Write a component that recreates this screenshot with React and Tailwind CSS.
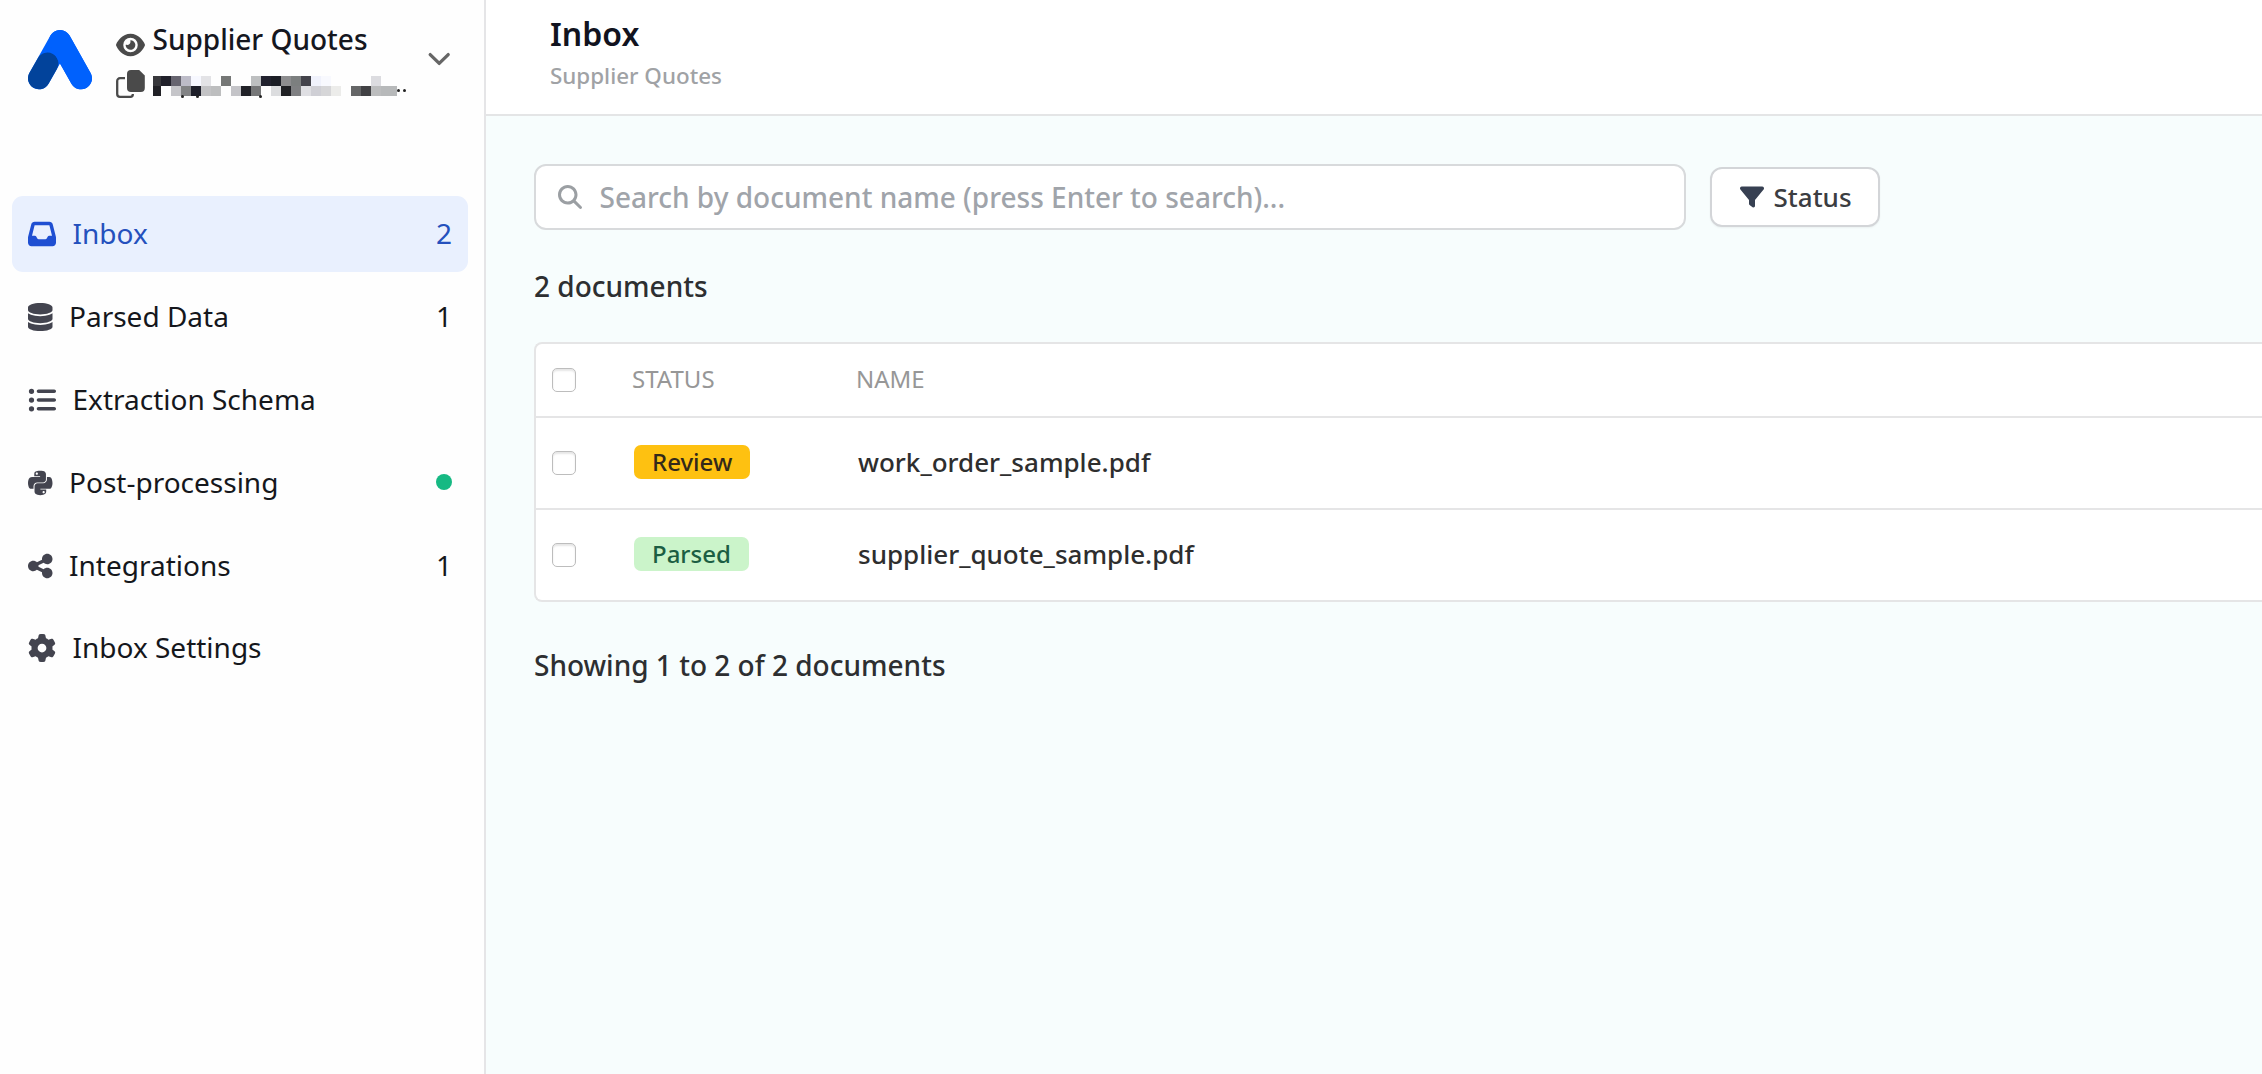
import {
  FaEye,
  FaDatabase,
  FaPython,
  FaShareNodes,
  FaGear,
  FaFilter,
  FaInbox,
  FaListUl,
  FaMagnifyingGlass,
} from "react-icons/fa6";

const MASK_TOP = [
  "#38383c", "#20202a", "#66646f", "#bdbcc8", "#f7f8ff", "#e3e3e6", "", "#757776", "", "",
  "#bdbfc0", "#22222e", "#1c1e26", "#8d8d8f", "#7c7f7f", "#43434b", "#f0f2fc", "#f8f9fe", "", "",
  "", "", "#dcdce0", "", "",
];
const MASK_BOTTOM = [
  "#212126", "", "#c5c5c9", "#828385", "#1e1f2a", "#c3c3c5", "#bdbebf", "", "#c4c4c8", "#212228",
  "#767778", "", "#dcdddf", "#202125", "#7f8082", "#dfdfe3", "#cfcfd5", "#d6d6d8", "#ececea", "",
  "#656667", "#414144", "#bcbdbe", "#b7b9ba", "#b7b9ba",
];

function MaskRow({ cells }) {
  return (
    <div className="flex h-[10px]">
      {cells.map((c, i) => (
        <span
          key={i}
          className={
            i === 0
              ? "w-[8px] shrink-0"
              : i === cells.length - 1
                ? "w-[6px] shrink-0"
                : "w-[10px] shrink-0"
          }
          style={{ backgroundColor: c || "transparent" }}
        />
      ))}
    </div>
  );
}

function Logo() {
  return (
    <svg viewBox="0 0 64 60" className="h-[60px] w-[64px] shrink-0" fill="none">
      <path
        d="M11 48.3 L32 11 L53 48.3"
        stroke="#0061fd"
        strokeWidth="22"
        strokeLinecap="round"
        strokeLinejoin="round"
      />
      <path d="M11 48.3 L19.4 33.6" stroke="#02439b" strokeWidth="22" strokeLinecap="round" />
      <path d="M32 11 L53 48.3" stroke="#0061fd" strokeWidth="22" strokeLinecap="round" />
    </svg>
  );
}

function CopyIcon() {
  return (
    <svg viewBox="0 0 29 28" className="h-[28px] w-[29px]" fill="none">
      <path
        d="M9 8.2H4A2.8 2.8 0 0 0 1.2 11V24A2.8 2.8 0 0 0 4 26.8H14.5A2.3 2.3 0 0 0 16.8 24.5V24"
        stroke="#4a4a4a"
        strokeWidth="2.3"
      />
      <path
        d="M15 0H23.2L28.8 5.4V18A4 4 0 0 1 24.8 22H15A4 4 0 0 1 11 18V4A4 4 0 0 1 15 0Z"
        fill="#4a4a4a"
      />
    </svg>
  );
}

function ChevronIcon() {
  return (
    <svg viewBox="0 0 24 24" className="-ml-px mt-[28px] size-[24px] shrink-0" fill="none">
      <path
        d="M3.2 7.6 L12.2 16.4 L21.2 7.6"
        stroke="#666"
        strokeWidth="3.3"
        strokeLinecap="round"
        strokeLinejoin="round"
      />
    </svg>
  );
}

const NAV = [
  { label: "Inbox", icon: FaInbox, count: "2", active: true },
  { label: "Parsed Data", icon: FaDatabase, count: "1", narrow: true },
  { label: "Extraction Schema", icon: FaListUl },
  { label: "Post-processing", icon: FaPython, dot: true, narrow: true },
  { label: "Integrations", icon: FaShareNodes, count: "1", narrow: true },
  { label: "Inbox Settings", icon: FaGear },
];

function NavItem({ item }) {
  const Icon = item.icon;
  return (
    <a
      className={
        item.active
          ? "flex h-[76px] items-center rounded-[11px] bg-[#e9f0fe] px-4 text-[#2450bd]"
          : "flex h-[76px] items-center rounded-[11px] px-4 text-[#15171c] last:-mt-px"
      }
    >
      <Icon
        className={
          (item.narrow ? "h-[28px] w-[24.5px] shrink-0 " : "h-[28px] w-[28px] shrink-0 ") +
          (item.active ? "text-[#1f4fd2]" : "text-[#43444f]")
        }
      />
      <span className="-mt-[2px] ml-[16.5px] flex-1">{item.label}</span>
      {item.count && <span className="-mt-[2px]">{item.count}</span>}
      {item.dot && <span className="mb-[2px] size-4 rounded-full bg-[#16b983]" />}
    </a>
  );
}

function Sidebar() {
  return (
    <aside className="flex w-[486px] shrink-0 flex-col border-r-2 border-[#e5e5e7] bg-[#fefefe] text-[28px] leading-[40px]">
      <div className="flex h-[196px] shrink-0 items-start pl-[28px] pt-[19px]">
        <div className="mt-[11px]">
          <Logo />
        </div>
        <div className="ml-[24px] w-[312px] shrink-0">
          <div className="flex items-center">
            <FaEye className="mt-[11px] h-[26px] w-[29px] shrink-0 text-[#4a4a4a]" />
            <span className="ml-[7.5px] font-medium text-[#15171f]">Supplier Quotes</span>
          </div>
          <div className="mt-[11px] flex">
            <CopyIcon />
            <div className="relative ml-[8px] mt-[6px] w-[244px] shrink-0">
              <MaskRow cells={MASK_TOP} />
              <MaskRow cells={MASK_BOTTOM} />
              <span className="absolute left-[28px] top-[19px] h-[3px] w-[3px] rounded-full bg-[#222]" />
              <span className="absolute left-[43px] top-[19px] h-[3px] w-[3px] rounded-full bg-[#222]" />
              <span className="absolute left-[106px] top-[19px] h-[3px] w-[3px] rounded-full bg-[#222]" />
            </div>
            <div className="mt-[19px] flex gap-[3px]">
              <span className="size-[3px] rounded-full bg-[#222]" />
              <span className="size-[3px] rounded-full bg-[#222]" />
            </div>
          </div>
        </div>
        <ChevronIcon />
      </div>
      <nav className="flex flex-col gap-[7px] pl-[12px] pr-[16px]">
        {NAV.map((item) => (
          <NavItem key={item.label} item={item} />
        ))}
      </nav>
    </aside>
  );
}

function Checkbox() {
  return (
    <span className="block size-[24px] rounded-[5px] border border-[#bdbdbd] bg-white shadow-[inset_0_2px_2px_rgba(0,0,0,0.1)]" />
  );
}

const ROWS = [
  { status: "Review", name: "work_order_sample.pdf", badge: "bg-[#fec111] text-[#33291a]" },
  { status: "Parsed", name: "supplier_quote_sample.pdf", badge: "bg-[#cbf4ca] text-[#1b5e43]" },
];

function DocumentTable() {
  return (
    <div className="h-[260px] rounded-l-[8px] border-2 border-r-0 border-[#e5e5e6] bg-white">
      <div className="flex h-[74px] items-center border-b-2 border-[#e5e5e6] pl-[16px] text-[24px] text-[#979797]">
        <Checkbox />
        <span className="-mt-[2px] ml-[56px] w-[224px]">STATUS</span>
        <span className="-mt-[2px]">NAME</span>
      </div>
      {ROWS.map((row) => (
        <div
          key={row.name}
          className="flex h-[92px] items-center border-b-2 border-[#e5e5e6] pl-[16px] font-medium last:h-[90px] last:border-b-0"
        >
          <Checkbox />
          <div className="ml-[58px] flex w-[224px]">
            <span
              className={`-mt-[2px] flex h-[34px] items-center rounded-[7px] px-[18px] text-[24px] leading-[34px] ${row.badge}`}
            >
              {row.status}
            </span>
          </div>
          <span className="-mt-[2px] text-[26px] text-[#2e2e2e]">{row.name}</span>
        </div>
      ))}
    </div>
  );
}

export default function App() {
  return (
    <div className="flex h-[1074px] w-[2262px] overflow-hidden bg-[#f7fdfd] font-['Noto_Sans',sans-serif]">
      <Sidebar />
      <div className="flex min-w-0 flex-1 flex-col">
        <header className="h-[116px] border-b-2 border-[#e4e5e6] bg-white pl-[64px] pt-[14px]">
          <h1 className="text-[32px] font-semibold leading-[40px] text-[#111320]">Inbox</h1>
          <p className="mt-[6px] text-[22.4px] font-medium leading-[32px] text-[#a0a2a5]">
            Supplier Quotes
          </p>
        </header>
        <main className="pl-[48px] pt-[48px]">
          <div className="flex items-center">
            <div className="flex h-[66px] w-[1152px] items-center rounded-[12px] border-2 border-[#d8dadc] bg-white pl-[22px]">
              <FaMagnifyingGlass className="size-[24px] text-[#9b9fa3]" />
              <span className="ml-[17.5px] text-[28px] font-medium text-[#a0a4aa]">
                Search by document name (press Enter to search)...
              </span>
            </div>
            <button className="ml-[24px] flex h-[60px] w-[170px] items-center rounded-[12px] border-2 border-[#d3d5d8] bg-white pl-[28px] shadow-xs">
              <FaFilter className="size-[24px] text-[#374052]" />
              <span className="ml-[9.5px] text-[26px] font-medium text-[#3b3d42]">Status</span>
            </button>
          </div>
          <p className="mb-[36px] mt-[36px] text-[28px] font-medium leading-[40px] text-[#2d2f31]">
            2 documents
          </p>
          <DocumentTable />
          <p className="mt-[43px] text-[28px] font-medium leading-[40px] text-[#2d2f31]">
            Showing 1 to 2 of 2 documents
          </p>
        </main>
      </div>
    </div>
  );
}
